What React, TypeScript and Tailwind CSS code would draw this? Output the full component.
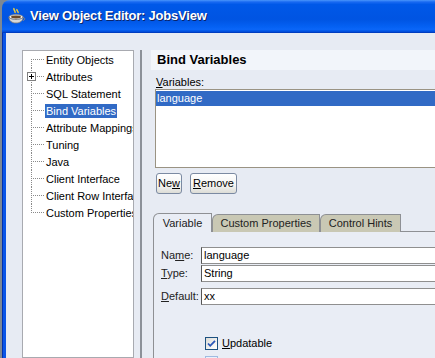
const treeItems = [
  "Entity Objects",
  "Attributes",
  "SQL Statement",
  "Bind Variables",
  "Attribute Mappings",
  "Tuning",
  "Java",
  "Client Interface",
  "Client Row Interface",
  "Custom Properties",
];

function CupIcon() {
  return (
    <svg width="18" height="18" viewBox="0 0 18 18" aria-hidden="true">
      <path d="M6 1c-1 2 2 3 1 5M9 2c-1 2 2 2 1 4" stroke="#f4d13a" strokeWidth="1.4" fill="none" />
      <ellipse cx="8" cy="10" rx="7" ry="2.4" fill="#f2f2f2" stroke="#8a8a8a" strokeWidth="0.8" />
      <path d="M1 10c0 4 3 6 7 6s7-2 7-6c0 1.4-3 2.4-7 2.4S1 11.4 1 10z" fill="#d7d7d7" stroke="#7a7a7a" strokeWidth="0.8" />
      <path d="M15 10.5c2 0 2.5 2.5 0 3" stroke="#8a8a8a" strokeWidth="1" fill="none" />
      <ellipse cx="8" cy="10" rx="5" ry="1.4" fill="#6b4a2a" />
    </svg>
  );
}

function TreeRow({ label, index }: { label: string; index: number }) {
  const first = index === 0;
  const last = index === treeItems.length - 1;
  const selected = label === "Bind Variables";
  return (
    <div className="flex h-[17px] items-center">
      <div className="relative h-full w-[22px] shrink-0">
        <span
          className={`absolute left-[8px] w-0 border-l border-dotted border-[#8a8a8a] ${first ? "top-[8px] bottom-0" : last ? "top-0 h-[9px]" : "top-0 bottom-0"}`}
        />
        <span className="absolute left-[8px] top-[8px] w-[13px] border-t border-dotted border-[#8a8a8a]" />
        {label === "Attributes" && (
          <span className="absolute left-[4px] top-[4px] flex h-[9px] w-[9px] items-center justify-center border border-[#7f7f7f] bg-white">
            <span className="absolute h-[1px] w-[5px] bg-black" />
            <span className="absolute h-[5px] w-[1px] bg-black" />
          </span>
        )}
      </div>
      <span
        className={`whitespace-nowrap px-[1px] leading-[14px] ${selected ? "bg-[#316ac5] text-white" : ""}`}
      >
        {label}
      </span>
    </div>
  );
}

function XpButton({ children, width }: { children: React.ReactNode; width: string }) {
  return (
    <button
      type="button"
      className={`h-[21px] ${width} rounded-[3px] border border-[#7b8aa2] bg-[linear-gradient(to_bottom,#ffffff_0%,#f4f4f2_60%,#dcdcd6_100%)] px-0 text-[11px] leading-none text-black`}
    >
      {children}
    </button>
  );
}

function Field({ label, value, top }: { label: React.ReactNode; value: string; top: string }) {
  return (
    <div className={`flex h-[17px] items-center ${top}`}>
      <span className="w-[47px] shrink-0 whitespace-nowrap pl-[7px] text-[#222]">{label}</span>
      <div className="flex h-full flex-1 items-center border border-r-0 border-[#8f8f8f] border-l-[#555] bg-white pl-[2px]">
        {value}
      </div>
    </div>
  );
}

export default function App() {
  return (
    <div className="flex h-[358px] w-[435px] overflow-hidden bg-[#7d8894] font-['Liberation_Sans',Arial,sans-serif] text-[11px] text-black">
      <div className="ml-[2px] flex flex-1 flex-col">
        <div className="flex h-[33px] shrink-0 items-center gap-[4px] rounded-tl-[8px] border-b border-[#003cc0] bg-[linear-gradient(to_bottom,#4a96fb_0%,#1a6af2_6%,#0058e8_14%,#0054e2_60%,#0460f2_82%,#0a66f8_92%,#0049d6_100%)] pl-[6px]">
          <CupIcon />
          <span className="text-[13px] font-bold tracking-[-0.2px] text-white [text-shadow:1px_1px_0_#0a246a]">
            View Object Editor: JobsView
          </span>
        </div>
        <div className="flex min-h-0 flex-1">
          <div className="w-[4px] shrink-0 border-l border-[#0030b0] bg-[#0a55e6]" />
          <div className="flex min-w-0 flex-1 bg-[#e7ebf3] pl-[16px] pt-[17px]">
            <div className="flex w-[112px] shrink-0 flex-col overflow-hidden border border-[#a8aab0] bg-white pt-0">
              {treeItems.map((item, i) => (
                <TreeRow key={item} label={item} index={i} />
              ))}
            </div>
            <div className="ml-[6px] w-[2px] shrink-0 bg-[#8c9199]" />
            <div className="ml-[9px] flex min-w-0 flex-1 flex-col">
              <div className="flex h-[20px] shrink-0 items-center bg-[#f2f5fa] pl-[6px] text-[13px] font-bold">
                Bind Variables
              </div>
              <div className="ml-[5px] mt-[6px] h-[13px] leading-[13px]">
                <u>V</u>ariables:
              </div>
              <div className="ml-[4px] h-[79px] shrink-0 border border-r-0 border-[#9a9383] bg-white pt-[1px]">
                <div className="flex h-[15px] items-center bg-[#316ac5] pl-[1px] text-white">language</div>
              </div>
              <div className="ml-[5px] mt-[5px] flex gap-[8px]">
                <XpButton width="w-[26px]">
                  Ne<u>w</u>
                </XpButton>
                <XpButton width="w-[47px]">
                  <u>R</u>emove
                </XpButton>
              </div>
              <div className="ml-[2px] mt-[19px] flex h-[19px] shrink-0 items-end">
                <div className="flex h-[19px] w-[59px] items-center justify-center rounded-tl-[6px] border border-b-0 border-[#8e9094] bg-[#e9edf5] text-[#222]">
                  Variable
                </div>
                <div className="flex h-[18px] w-[108px] items-center justify-center rounded-tl-[6px] border border-b-0 border-[#8e9094] bg-[#c9c8b4] text-[#222]">
                  Custom Properties
                </div>
                <div className="flex h-[18px] w-[81px] items-center justify-center rounded-tl-[6px] border border-b-0 border-[#8e9094] bg-[#c9c8b4] text-[#222]">
                  Control Hints
                </div>
                <div className="flex-1 border-b border-[#8e9094]" />
              </div>
              <div className="ml-[2px] flex flex-1 flex-col border-l border-[#8e9094] bg-[#e9edf5] pt-[15px]">
                <Field label={<>Na<u>m</u>e:</>} value="language" top="" />
                <Field label={<><u>T</u>ype:</>} value="String" top="mt-[1px]" />
                <Field label={<><u>D</u>efault:</>} value="xx" top="mt-[6px]" />
                <div className="ml-[51px] mt-[30px] flex items-center gap-[4px]">
                  <span className="flex h-[13px] w-[13px] items-center justify-center border border-[#1c5180] bg-[linear-gradient(to_bottom_right,#dcdcd7,#ffffff)]">
                    <svg width="9" height="9" viewBox="0 0 9 9" aria-hidden="true">
                      <path d="M1 4.5l2.2 2.3L8 1.8" stroke="#2a56b8" strokeWidth="1.8" fill="none" />
                    </svg>
                  </span>
                  <span>
                    <u>U</u>pdatable
                  </span>
                </div>
                <div className="ml-[51px] mt-[4px] h-[13px] w-[13px] border border-[#9fbbe0] bg-[#eaf1fb]" />
              </div>
            </div>
          </div>
        </div>
      </div>
    </div>
  );
}
